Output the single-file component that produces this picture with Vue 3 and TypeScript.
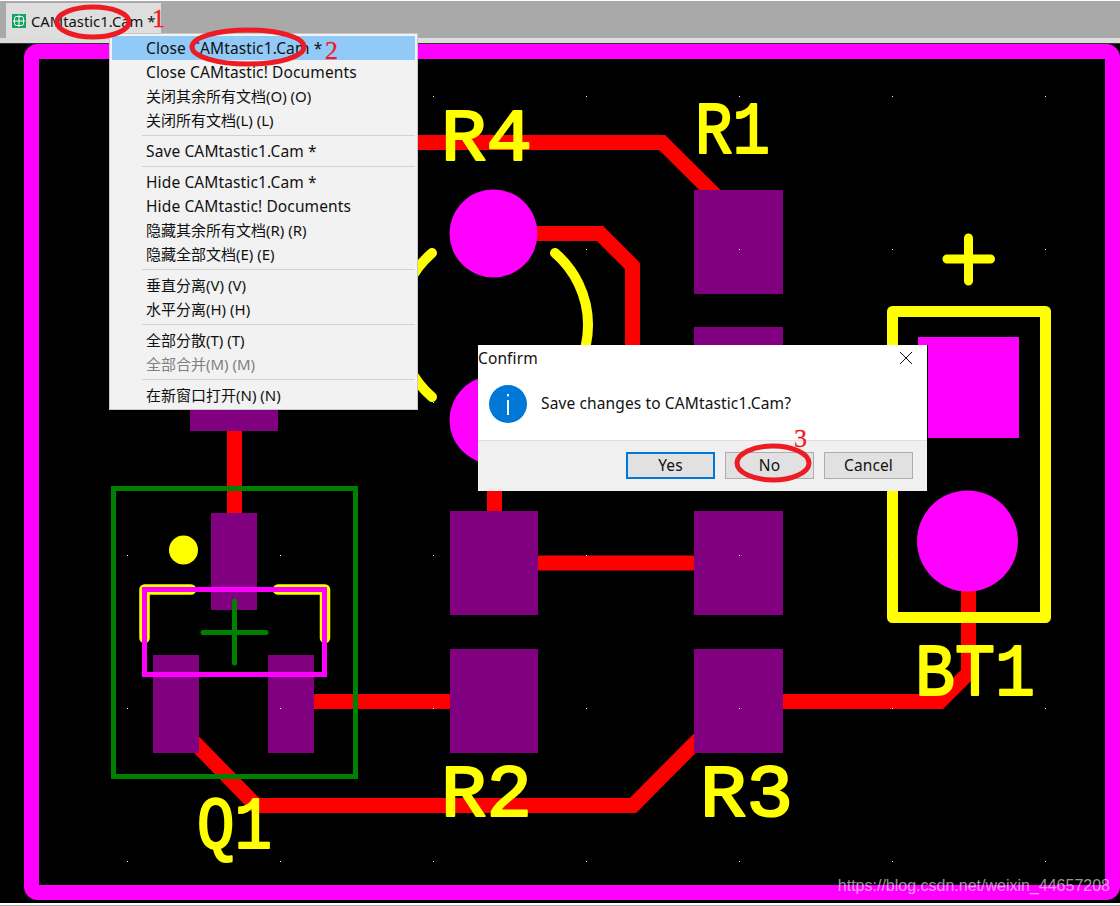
<script setup lang="ts">
interface Row { label?: string; active?: boolean; disabled?: boolean; sep?: boolean; latin?: boolean }
const rows: Row[] = [
  { label: 'Close CAMtastic1.Cam *', active: true, latin: true },
  { label: 'Close CAMtastic! Documents', latin: true },
  { label: '关闭其余所有文档(O) (O)' },
  { label: '关闭所有文档(L) (L)' },
  { sep: true },
  { label: 'Save CAMtastic1.Cam *', latin: true },
  { sep: true },
  { label: 'Hide CAMtastic1.Cam *', latin: true },
  { label: 'Hide CAMtastic! Documents', latin: true },
  { label: '隐藏其余所有文档(R) (R)' },
  { label: '隐藏全部文档(E) (E)' },
  { sep: true },
  { label: '垂直分离(V) (V)' },
  { label: '水平分离(H) (H)' },
  { sep: true },
  { label: '全部分散(T) (T)' },
  { label: '全部合并(M) (M)', disabled: true },
  { sep: true },
  { label: '在新窗口打开(N) (N)' },
]
const pads = [
  [694, 190, 89, 104], [694, 327, 89, 104], [190, 327, 88, 104],
  [450, 511, 88, 104], [450, 649, 88, 104], [694, 511, 89, 104], [694, 649, 89, 104],
  [211, 513, 46, 97], [153, 655, 46, 98], [268, 655, 46, 98],
]
const traces = [
  'M300,142.5 H662 L720,200',
  'M537,233.5 H600 L632.5,266 V360',
  'M234.5,425 V520',
  'M494.5,480 V520',
  'M530,563 H700',
  'M305,701.5 H460',
  'M192,740 L256,805.5 H633 L700,738',
  'M775,701.5 H940 L968.5,673 V585',
]
const labels = [
  { t: 'R4', x: 441, y: 160, w: 91 },
  { t: 'R1', x: 695, y: 153, w: 75 },
  { t: 'R2', x: 441, y: 816, w: 91 },
  { t: 'R3', x: 700, y: 816, w: 93 },
  { t: 'Q1', x: 197, y: 848, w: 75 },
  { t: 'BT1', x: 915, y: 695, w: 120 },
]
const dots: [number, number][] = []
for (const x of [127, 280, 433, 586, 739, 892, 1045]) {
  for (const y of [96, 249, 402, 555, 708, 861]) dots.push([x, y])
}
</script>

<template>
  <div class="app">
    <header class="tabbar">
      <div class="tab">
        <svg class="doc-icon" width="14" height="14" viewBox="0 0 14 14">
          <rect x="0" y="0" width="14" height="14" fill="#16a35f" />
          <rect x="2.5" y="2.5" width="9" height="9" rx="2" fill="none" stroke="#fff" />
          <path d="M7 1V13M1 7H13" stroke="#fff" />
        </svg>
        <span class="tab-label">CAMtastic1.Cam *</span>
      </div>
    </header>

    <svg class="board" width="1120" height="859" viewBox="0 44 1120 859">
      <rect x="0" y="44" width="1120" height="859" fill="#000" />
      <rect x="31.5" y="51.5" width="1081" height="841" rx="6" fill="none" stroke="#ff00ff" stroke-width="15" />

      <path v-for="t in traces" :key="t" :d="t" fill="none" stroke="#ff0000" stroke-width="15" />

      <circle cx="493.5" cy="233.5" r="44" fill="#ff00ff" />
      <circle cx="493.5" cy="420" r="44" fill="#ff00ff" />
      <rect x="918" y="337" width="101" height="101" fill="#ff00ff" />
      <circle cx="967.5" cy="541" r="50.5" fill="#ff00ff" />
      <rect v-for="(p, i) in pads" :key="i" :x="p[0]" :y="p[1]" :width="p[2]" :height="p[3]" fill="#800080" />

      <g fill="none" stroke="#ffff00" stroke-linecap="round" stroke-linejoin="round">
        <path d="M555,253 A95,95 0 0 1 555,397" stroke-width="10" />
        <path d="M432,253 A95,95 0 0 0 432,397" stroke-width="10" />
        <path d="M892.5,311.5 H1045.5 V617.5 H892.5 Z" stroke-width="11" />
        <path d="M947,259 H990.5 M968.5,238 V281" stroke-width="9" />
        <path d="M191,589.5 H144.5 V638" stroke-width="10.5" />
        <path d="M278,589.5 H325 V638" stroke-width="10.5" />
      </g>
      <circle cx="183.5" cy="550" r="14.5" fill="#ffff00" />
      <rect x="144.5" y="589.5" width="180" height="85" fill="none" stroke="#ff00ff" stroke-width="5" />
      <rect x="113.5" y="488.5" width="242" height="288" fill="none" stroke="#008000" stroke-width="5" />
      <path d="M203,632.5 H266 M234.5,601 V663" fill="none" stroke="#008000" stroke-width="5" stroke-linecap="round" />

      <text
        v-for="l in labels"
        :key="l.t"
        class="silk"
        :x="l.x"
        :y="l.y"
        :textLength="l.w"
        lengthAdjust="spacingAndGlyphs"
      >{{ l.t }}</text>

      <rect v-for="d in dots" :key="d[0] + '-' + d[1]" :x="d[0]" :y="d[1]" width="1" height="1" fill="#fff" />
    </svg>

    <footer class="statusline"></footer>

    <div class="menu">
      <template v-for="(r, i) in rows" :key="i">
        <div v-if="r.sep" class="sep"></div>
        <div v-else class="row" :class="{ active: r.active, disabled: r.disabled, latin: r.latin }">{{ r.label }}</div>
      </template>
    </div>

    <div class="dialog latin">
      <div class="title-row">
        <span>Confirm</span>
        <svg width="14" height="14" viewBox="0 0 14 14" class="close">
          <path d="M1 1L13 13M13 1L1 13" stroke="#111" stroke-width="1" fill="none" />
        </svg>
      </div>
      <div class="body-row">
        <svg width="38" height="38" viewBox="0 0 38 38">
          <circle cx="19" cy="19" r="19" fill="#0078d7" />
          <rect x="18" y="9" width="2" height="2.4" fill="#fff" />
          <rect x="18" y="15" width="2" height="15" fill="#fff" />
        </svg>
        <span>Save changes to CAMtastic1.Cam?</span>
      </div>
      <div class="btn-row">
        <button class="btn primary">Yes</button>
        <button class="btn">No</button>
        <button class="btn">Cancel</button>
      </div>
    </div>

    <svg class="marks" width="1120" height="906" viewBox="0 0 1120 906">
      <g fill="none" stroke="#ed1c24" stroke-width="5">
        <ellipse cx="93" cy="22" rx="36" ry="15" />
        <ellipse cx="248" cy="47" rx="56" ry="17" />
        <ellipse cx="773" cy="463" rx="36" ry="17" />
      </g>
      <text class="num" x="152" y="27">1</text>
      <text class="num" x="325" y="59">2</text>
      <text class="num" x="794" y="447">3</text>
    </svg>

    <div class="watermark">https://blog.csdn.net/weixin_44657208</div>
  </div>
</template>

<style>
html, body { margin: 0; padding: 0; background: #a9a9a9; overflow: hidden; }
</style>

<style scoped>
.app {
  position: relative;
  width: 1120px;
  height: 906px;
  display: flex;
  flex-direction: column;
  overflow: hidden;
  font-family: "Noto Sans", "Noto Sans CJK SC", sans-serif;
  color: #111;
  background: #a9a9a9;
}
.tabbar {
  height: 44px;
  box-sizing: border-box;
  flex: none;
  padding: 2px 0 0 6px;
  background: #a9a9a9;
  border-top: 1px solid #fff;
  box-shadow: inset 0 -5px 0 #dcdcdc;
  border-bottom: 1px solid #333;
  display: flex;
}
.tab {
  width: 155px;
  height: 35px;
  box-sizing: border-box;
  padding: 0 0 0 6px;
  background: #dedede;
  display: flex;
  align-items: center;
  gap: 5px;
  white-space: nowrap;
}
.tab-label { font-size: 14.8px; }
.doc-icon { flex: none; }
.latin {
  font-size: 15.5px;
  letter-spacing: 0.12px;
}
.board { display: block; flex: none; }
.statusline {
  flex: 1;
  border-top: 2px solid #fff;
  background: #a9a9a9;
}
.menu {
  position: absolute;
  left: 109px;
  top: 33px;
  width: 309px;
  height: 377px;
  box-sizing: border-box;
  padding: 2px;
  background: #f2f2f2;
  border: 1px solid #c8c8c8;
  font-size: 15px;
}
.row {
  height: 24px;
  line-height: 24px;
  padding-left: 34px;
  white-space: nowrap;
}
.row.active { background: #91c9f7; }
.row.disabled { color: #808080; }
.sep {
  height: 1px;
  margin: 3px 0 3px 30px;
  background: #d2d2d2;
}
.dialog {
  position: absolute;
  left: 478px;
  top: 345px;
  width: 449px;
  height: 146px;
  display: flex;
  flex-direction: column;
  background: #fff;
  box-shadow: 1px 0 0 #000;
}
.title-row {
  height: 25px;
  flex: none;
  display: flex;
  align-items: center;
  justify-content: space-between;
  padding: 1px 14px 0 0;
  box-sizing: border-box;
}
.body-row {
  flex: 1;
  display: flex;
  align-items: center;
  gap: 14px;
  padding: 0 0 2px 11px;
}
.body-row span { position: relative; top: -1px; }
.btn-row {
  height: 51px;
  flex: none;
  box-sizing: border-box;
  padding: 11px 14px 0 0;
  background: #f0f0f0;
  border-top: 1px solid #dfdfdf;
  display: flex;
  justify-content: flex-end;
  gap: 10px;
}
.btn {
  width: 89px;
  height: 27px;
  box-sizing: border-box;
  padding: 0 0 1px;
  background: #e1e1e1;
  border: 1px solid #adadad;
  font: inherit;
  letter-spacing: inherit;
  color: #111;
}
.btn.primary { border: 2px solid #0078d7; }
.silk {
  font-family: "Liberation Mono", monospace;
  font-size: 75px;
  fill: #ffff00;
  stroke: #ffff00;
  stroke-width: 2.2;
  stroke-linejoin: round;
}
.marks {
  position: absolute;
  left: 0;
  top: 0;
  pointer-events: none;
}
.num {
  font-family: "Liberation Serif", serif;
  font-size: 26px;
  fill: #ed1c24;
  stroke: #ed1c24;
  stroke-width: 0.3;
}
.watermark {
  position: absolute;
  right: 10px;
  top: 876px;
  font-family: "Liberation Sans", sans-serif;
  font-size: 16px;
  line-height: 20px;
  color: rgba(255, 255, 255, 0.6);
}
</style>
